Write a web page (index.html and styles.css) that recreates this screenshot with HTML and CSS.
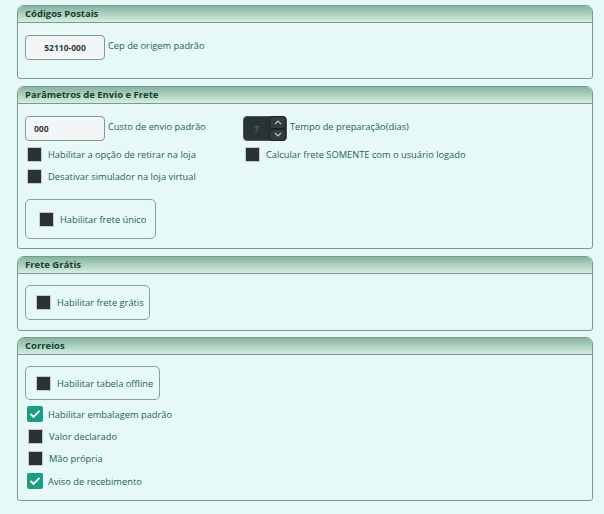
FILE: index.html
```html
<!DOCTYPE html>
<html lang="pt-BR">
<head>
<meta charset="utf-8">
<link rel="stylesheet" href="styles.css">
</head>
<body>
<div class="page">
  <section class="panel">
    <div class="panel-head">Códigos Postais</div>
    <div class="panel-body p1">
      <div class="field">
        <div class="input center">52110-000</div>
        <span class="lbl">Cep de origem padrão</span>
      </div>
    </div>
  </section>

  <section class="panel">
    <div class="panel-head">Parâmetros de Envio e Frete</div>
    <div class="panel-body p2">
      <div class="col-left">
        <div class="field">
          <div class="input">000</div>
          <span class="lbl">Custo de envio padrão</span>
        </div>
        <label class="check row-first"><span class="cb"></span><span class="lbl">Habilitar a opção de retirar na loja</span></label>
        <label class="check"><span class="cb"></span><span class="lbl">Desativar simulador na loja virtual</span></label>
        <div class="box box-unico">
          <label class="check"><span class="cb"></span><span class="lbl">Habilitar frete único</span></label>
        </div>
      </div>
      <div class="col-right">
        <div class="field">
          <div class="spinner">
            <span class="spin-val">7</span>
            <span class="spin-btns">
              <span class="spin-btn"><svg width="8" height="5" viewBox="0 0 8 5"><path d="M1 4 L4 1 L7 4" fill="none" stroke="#b9c4c4" stroke-width="1.2"/></svg></span>
              <span class="spin-btn"><svg width="8" height="5" viewBox="0 0 8 5"><path d="M1 1 L4 4 L7 1" fill="none" stroke="#b9c4c4" stroke-width="1.2"/></svg></span>
            </span>
          </div>
          <span class="lbl">Tempo de preparação(dias)</span>
        </div>
        <label class="check row-first r"><span class="cb"></span><span class="lbl">Calcular frete SOMENTE com o usuário logado</span></label>
      </div>
    </div>
  </section>

  <section class="panel">
    <div class="panel-head">Frete Grátis</div>
    <div class="panel-body p3">
      <div class="box box-gratis">
        <label class="check"><span class="cb"></span><span class="lbl">Habilitar frete grátis</span></label>
      </div>
    </div>
  </section>

  <section class="panel">
    <div class="panel-head">Correios</div>
    <div class="panel-body p4">
      <div class="box box-offline">
        <label class="check"><span class="cb"></span><span class="lbl">Habilitar tabela offline</span></label>
      </div>
      <div class="list">
        <label class="check c2"><span class="cb on"><svg width="12" height="10" viewBox="0 0 12 10"><path d="M1.5 5 L4.5 8 L10.5 1.8" fill="none" stroke="#fff" stroke-width="1.8"/></svg></span><span class="lbl">Habilitar embalagem padrão</span></label>
        <label class="check c2"><span class="cb"></span><span class="lbl">Valor declarado</span></label>
        <label class="check c2"><span class="cb"></span><span class="lbl">Mão própria</span></label>
        <label class="check c2"><span class="cb on"><svg width="12" height="10" viewBox="0 0 12 10"><path d="M1.5 5 L4.5 8 L10.5 1.8" fill="none" stroke="#fff" stroke-width="1.8"/></svg></span><span class="lbl">Aviso de recebimento</span></label>
      </div>
    </div>
  </section>
</div>
</body>
</html>
```

FILE: styles.css
```css
* { box-sizing: border-box; }
html, body { margin: 0; padding: 0; }
body {
  background: #e6f9f6;
  font-family: "Open Sans", "Noto Sans", sans-serif;
  font-size: 9.3px;
  color: #265f59;
  width: 604px;
  height: 514px;
  overflow: hidden;
}
.page {
  padding: 5px 11px 0 17px;
  display: flex;
  flex-direction: column;
  gap: 7px;
}
.panel {
  border: 1px solid #7c9893;
  border-radius: 7px 7px 3px 3px;
  background: #e6f9f6;
}
.panel-head {
  height: 17px;
  border-bottom: 1px solid #7c9893;
  border-radius: 6px 6px 0 0;
  background: linear-gradient(#86b39f, #d6eee2);
  color: #153f30;
  font-weight: 700;
  font-size: 9.5px;
  line-height: 16px;
  padding-left: 7px;
}
.panel-body { padding: 12px 7px 0 7px; }
.p1 { height: 55px; }
.p2 { display: flex; height: 144px; }
.p3 { height: 56px; padding-top: 11px; }
.p4 { height: 145px; padding-top: 11px; }
.page > .panel:nth-child(4) { margin-top: -1px; }

.field { display: flex; align-items: center; gap: 3px; }
.input {
  width: 80px;
  height: 25px;
  border: 1px solid #8a9493;
  border-radius: 4px;
  background: #f3f6f6;
  color: #2e3a3c;
  font-weight: 700;
  font-size: 8.5px;
  line-height: 23px;
  padding-left: 8px;
}
.input.center { text-align: center; padding-left: 0; }
.field .lbl { position: relative; top: -2px; }

.col-left { width: 218px; display: flex; flex-direction: column; }
.col-right { display: flex; flex-direction: column; }

.check { display: flex; align-items: center; gap: 6px; height: 22px; }
.cb {
  width: 15px;
  height: 15px;
  background: #2a3237;
  border: 1px solid #c3cbcb;
  border-radius: 1px;
  flex: none;
  display: flex;
  align-items: center;
  justify-content: center;
}
.cb.on {
  width: 16px;
  height: 16px;
  background: #1b9d84;
  border: none;
  border-radius: 2px;
}
.col-left .check { padding-left: 2px; }
.row-first { margin-top: 2px; }
.col-right .check.r { padding-left: 2px; }

.box {
  border: 1px solid #88a09c;
  border-radius: 5px;
  display: flex;
  align-items: center;
}
.box-unico { width: 131px; height: 40px; margin-top: 12px; padding-left: 13px; }
.col-left .box-unico .check { padding-left: 0; }
.box-gratis { width: 125px; height: 35px; padding-left: 10px; }
.box-offline { width: 135px; height: 34px; padding-left: 10px; }

.list { display: flex; flex-direction: column; padding-top: 3px; }
.check.c2 { height: 22.4px; padding-left: 2px; gap: 5px; }
.check.c2 .cb:not(.on) { margin-left: 1px; margin-right: 1px; }

.spinner {
  width: 44px;
  height: 25px;
  background: #2a3237;
  border: 1px solid #4b5557;
  border-radius: 4px;
  display: flex;
  align-items: center;
}
.spin-val {
  flex: 1;
  text-align: center;
  color: #3c6b64;
  font-size: 9px;
  font-weight: 700;
}
.spin-btns { display: flex; flex-direction: column; width: 17px; height: 25px; margin-top: -1px; margin-bottom: -1px; }
.spin-btn {
  flex: 1;
  background: #333c41;
  border: 1px solid #1d2326;
  border-radius: 3px;
  display: flex;
  align-items: center;
  justify-content: center;
}
```
